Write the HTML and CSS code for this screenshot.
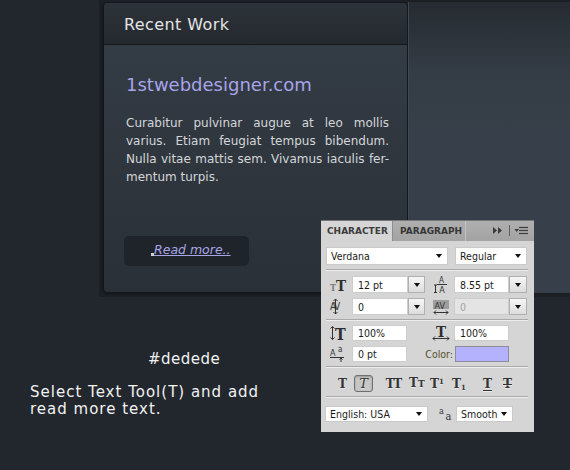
FILE: index.html
```html
<!DOCTYPE html>
<html>
<head>
<meta charset="utf-8">
<link rel="stylesheet" href="styles.css">
</head>
<body>
<div class="stage">
  <section class="card">
    <header class="card-head"><h2>Recent Work</h2></header>
    <div class="card-body">
      <h3 class="site">1stwebdesigner.com</h3>
      <p class="copy">
        <span class="ln">Curabitur pulvinar augue at leo mollis</span>
        <span class="ln">varius. Etiam feugiat tempus bibendum.</span>
        <span class="ln">Nulla vitae mattis sem. Vivamus iaculis fer-</span>
        <span class="ln last">mentum turpis.</span>
      </p>
      <a class="more"><span class="caret"></span>Read more..</a>
    </div>
  </section>
  <div class="side"></div>
</div>
<p class="hex">#dedede</p>
<p class="note">Select Text Tool(T) and add<br>read more text.</p>

<div class="ps">
  <div class="ps-tabs">
    <span class="tab on">CHARACTER</span>
    <span class="tab">PARAGRAPH</span>
    <svg class="tools" width="68" height="20" viewBox="0 0 68 20">
      <polygon points="27,6 31,9.5 27,13" fill="#3c3c3c"/>
      <polygon points="32,6 36,9.5 32,13" fill="#3c3c3c"/>
      <line x1="43.5" y1="4" x2="43.5" y2="15" stroke="#5e5e5e"/>
      <polygon points="48.5,8 53,8 50.75,11" fill="#3c3c3c"/>
      <line x1="53" y1="6.5" x2="62" y2="6.5" stroke="#3c3c3c" stroke-width="1.2"/>
      <line x1="53" y1="9.5" x2="62" y2="9.5" stroke="#3c3c3c" stroke-width="1.2"/>
      <line x1="53" y1="12.5" x2="62" y2="12.5" stroke="#3c3c3c" stroke-width="1.2"/>
    </svg>
  </div>
  <div class="ps-body">
    <div class="r1">
      <span class="dd w122">Verdana<i class="arr"></i></span>
      <span class="dd w72">Regular<i class="arr"></i></span>
    </div>
    <div class="sep"></div>
    <div class="g2">
      <span class="ic l">
        <svg width="18" height="15" viewBox="0 0 18 15">
          <text x="0" y="13.5" font-family="DejaVu Serif" font-weight="bold" font-size="9" fill="#7a7a7a">T</text>
          <text x="6" y="13.5" font-family="DejaVu Serif" font-weight="bold" font-size="15" fill="#2e2e2e">T</text>
        </svg>
      </span>
      <span class="in">12 pt</span>
      <span class="btn"><i class="arr"></i></span>
      <span class="ic r">
        <svg width="15" height="17" viewBox="0 0 15 17">
          <text x="8.5" y="6.5" text-anchor="middle" font-family="DejaVu Sans" font-size="8" fill="#333">A</text>
          <line x1="4" y1="8.5" x2="14" y2="8.5" stroke="#333"/>
          <text x="9" y="16.5" text-anchor="middle" font-family="DejaVu Sans" font-size="9" fill="#333">A</text>
          <path d="M2.5 9v7.5M1 16.5h3M1 9h3" stroke="#333" fill="none"/>
        </svg>
      </span>
      <span class="in">8.55 pt</span>
      <span class="btn"><i class="arr"></i></span>
    </div>
    <div class="g2">
      <span class="ic l">
        <svg width="16" height="17" viewBox="0 0 16 17">
          <text x="0" y="12" font-family="DejaVu Sans" font-size="10" fill="#333" letter-spacing="-1.5">AV</text>
          <path d="M5.5 1v15M3.5 3l2-2 2 2M3.5 14l2 2 2-2" stroke="#333" fill="none"/>
        </svg>
      </span>
      <span class="in">0</span>
      <span class="btn"><i class="arr"></i></span>
      <span class="ic r">
        <svg width="16" height="16" viewBox="0 0 16 16">
          <rect x="0" y="1" width="16" height="9" fill="#9d9d9d"/>
          <text x="1.5" y="9.5" font-family="DejaVu Sans" font-size="9" fill="#333">AV</text>
          <path d="M1 13.5h14M3 11.5l-2 2 2 2M13 11.5l2 2-2 2" stroke="#333" fill="none"/>
        </svg>
      </span>
      <span class="in off">0</span>
      <span class="btn"><i class="arr"></i></span>
    </div>
    <div class="sep"></div>
    <div class="g4">
      <span class="ic l">
        <svg width="18" height="16" viewBox="0 0 18 16">
          <path d="M2.5 1.5v13M0.5 3.5l2-2 2 2M0.5 12.5l2 2 2-2" stroke="#333" fill="none"/>
          <text x="5" y="14.5" font-family="DejaVu Serif" font-weight="bold" font-size="16" fill="#2e2e2e">T</text>
        </svg>
      </span>
      <span class="in">100%</span>
      <span class="ic r4">
        <svg width="18" height="16" viewBox="0 0 18 16">
          <text x="9" y="11.5" text-anchor="middle" font-family="DejaVu Serif" font-weight="bold" font-size="15" fill="#2e2e2e">T</text>
          <path d="M1 13.5h16M3 11.5l-2 2 2 2M15 11.5l2 2-2 2" stroke="#333" fill="none"/>
        </svg>
      </span>
      <span class="in">100%</span>
    </div>
    <div class="g4">
      <span class="ic l">
        <svg width="16" height="16" viewBox="0 0 16 16">
          <text x="0" y="10" font-family="DejaVu Sans" font-size="9" fill="#333">A</text>
          <text x="8" y="6" font-family="DejaVu Sans" font-size="8" fill="#333">a</text>
          <line x1="0" y1="11.5" x2="14" y2="11.5" stroke="#333"/>
          <path d="M11 16v-4M9.5 13.5l1.5-1.5 1.5 1.5" stroke="#333" fill="none"/>
        </svg>
      </span>
      <span class="in">0 pt</span>
      <span class="lbl">Color:</span>
      <span class="sw"></span>
    </div>
    <div class="sep"></div>
    <div class="r6">
      <span class="st s1">T</span>
      <span class="st box"><em>T</em></span>
      <span class="st s3">TT</span>
      <span class="st s4">T<span class="smc">T</span></span>
      <span class="st s5">T<span class="sup">1</span></span>
      <span class="st s6">T<span class="sub">1</span></span>
      <span class="st s7">T</span>
      <span class="st s8">T</span>
    </div>
    <div class="sep"></div>
    <div class="r7">
      <span class="dd w103">English: USA<i class="arr"></i></span>
      <svg class="aa" width="14" height="14" viewBox="0 0 14 14">
        <text x="0" y="7" font-family="DejaVu Serif" font-size="9" fill="#333">a</text>
        <text x="6.5" y="12.5" font-family="DejaVu Serif" font-size="11" fill="#333">a</text>
      </svg>
      <span class="dd w57">Smooth<i class="arr"></i></span>
    </div>
  </div>
</div>
</body>
</html>
```
FILE: styles.css
```css
* { box-sizing: border-box; }
html, body { margin: 0; }
body {
  width: 570px;
  height: 470px;
  overflow: hidden;
  position: relative;
  background: #22272e;
  font-family: "DejaVu Sans", Verdana, sans-serif;
}

/* ---------- site mock ---------- */
.stage {
  display: flex;
  height: 297px;
  margin-left: 99px;
  padding: 2px 0 4px 4px;
  background: #1c2025;
}
.card {
  width: 305px;
  display: flex;
  flex-direction: column;
  border: 1px solid #14171b;
  border-radius: 5px;
  overflow: hidden;
  box-shadow: -1px 1px 2px rgba(0,0,0,.35);
}
.card-head {
  height: 42px;
  padding: 11.5px 20px 0;
  background: linear-gradient(#2d333a, #24292f);
  border-bottom: 1px solid #15181c;
}
.card-head h2 {
  margin: 0;
  font-size: 16px;
  line-height: 20px;
  font-weight: normal;
  letter-spacing: .4px;
  color: #e4e4e4;
}
.card-body {
  flex: 1;
  padding: 29px 18px 0 22px;
  background: linear-gradient(#333b44, #2a3037);
}
.site {
  margin: 0;
  font-size: 18px;
  line-height: 22px;
  font-weight: normal;
  color: #a8a4e8;
}
.copy {
  margin: 18px 0 0;
  font-size: 12px;
  line-height: 18px;
  color: #d3d6d9;
}
.ln {
  display: block;
  text-align: justify;
  text-align-last: justify;
}
.ln.last { text-align-last: left; }
.more {
  display: block;
  position: relative;
  width: 125px;
  height: 30px;
  margin: 50px 0 0 -2px;
  padding-left: 30px;
  border-radius: 5px;
  background: #1f242a;
  color: #a8a4e8;
  font-size: 12.5px;
  line-height: 28px;
  font-style: italic;
  text-decoration: underline;
}
.caret {
  position: absolute;
  left: 27px;
  top: 17px;
  width: 3px;
  height: 3px;
  background: #d0d0d0;
}
.side {
  flex: 1;
  border-left: 1px solid #404952;
  background: linear-gradient(#262b31, #343c45 70px, #37404a 140px);
}

.hex {
  margin: 53px 0 0 148px;
  font-size: 15px;
  line-height: 18px;
  letter-spacing: .5px;
  color: #f2f2f2;
}
.note {
  margin: 16px 0 0 30px;
  font-size: 15px;
  line-height: 17px;
  letter-spacing: 1px;
  color: #f2f2f2;
}

/* ---------- Photoshop character panel ---------- */
.ps {
  position: absolute;
  left: 321px;
  top: 220px;
  width: 213px;
  height: 212px;
  background: #d5d5d5;
  border-top: 1px solid #777;
  font-size: 10.5px;
  font-stretch: semi-condensed;
  color: #1a1a1a;
}
.ps svg { overflow: visible; }
.ps-tabs {
  display: flex;
  height: 20px;
  background: linear-gradient(#afafaf, #a3a3a3);
}
.tab {
  width: 73px;
  padding-left: 7px;
  font-size: 9px;
  font-weight: bold;
  font-stretch: normal;
  line-height: 20px;
  color: #363636;
  border-right: 1px solid #c3c3c3;
}
.tab.on {
  width: 72px;
  padding-left: 6px;
  background: #d5d5d5;
  color: #3c3c3c;
  border-right: 1px solid #8e8e8e;
}
.tools { display: block; }

.ps-body { padding-left: 5px; }
.r1 { display: flex; height: 18px; margin-top: 6px; }
.dd {
  display: flex;
  align-items: center;
  padding-left: 4px;
  background: #fff;
  border: 1px solid #cacaca;
  white-space: nowrap;
}
.w122 { width: 122px; }
.w72 { width: 72px; margin-left: 7px; }
.arr {
  width: 0;
  height: 0;
  border-left: 3px solid transparent;
  border-right: 3px solid transparent;
  border-top: 4px solid #111;
}
.dd .arr { margin-left: auto; margin-right: 5px; }

.sep {
  height: 2px;
  margin: 4px 6px 0 0;
  border-top: 1px solid #a9a9a9;
  border-bottom: 1px solid #ededed;
}
.g2 {
  display: grid;
  grid-template-columns: 26px 56px 17px 29px 55px 18px;
  height: 17px;
  margin-top: 5px;
}
.g4 {
  display: grid;
  grid-template-columns: 26px 55px 47px 55px;
  height: 16px;
  margin-top: 5px;
}
.sep + .g4 { margin-top: 4px; }
.ic { display: flex; align-items: center; }
.ic.l { padding-left: 4px; }
.ic.r { padding-left: 8px; }
.ic.r4 { padding-left: 25px; }
.ic svg { display: block; }
.in {
  display: flex;
  align-items: center;
  padding-left: 5px;
  background: #fff;
  border: 1px solid #cdcdcd;
}
.in.off { background: #e4e4e4; color: #a3a3a3; }
.btn {
  display: flex;
  align-items: center;
  justify-content: center;
  background: linear-gradient(#f6f6f6, #dcdcdc);
  border: 1px solid #b0b0b0;
}
.lbl {
  display: flex;
  align-items: center;
  justify-content: flex-end;
  padding-right: 1px;
  color: #57502c;
}
.sw {
  margin-left: 1px;
  background: #b4b1fd;
  border: 1px solid #8d8c9c;
}

.r6 {
  display: flex;
  align-items: center;
  height: 17px;
  margin-top: 7px;
}
.st {
  display: block;
  font-family: "DejaVu Serif", serif;
  font-weight: bold;
  font-size: 12px;
  font-stretch: normal;
  line-height: 16px;
  color: #333;
  text-align: center;
  white-space: nowrap;
  text-shadow: 0 1px 0 rgba(255,255,255,.5);
}
.s1 { width: 9px; margin-left: 12px; }
.box {
  width: 19px;
  height: 17px;
  margin-left: 7px;
  border: 1px solid #6f6f6f;
  border-radius: 3px;
  background: #c7c7c7;
  box-shadow: inset 0 1px 2px rgba(0,0,0,.25);
  line-height: 15px;
}
.box em { font-style: italic; font-weight: normal; font-size: 13px; }
.s3 { width: 17px; margin-left: 12px; letter-spacing: -1px; }
.s4 { width: 13px; margin-left: 7px; }
.smc { font-size: 9px; }
.s5 { width: 13px; margin-left: 8px; }
.sup { font-size: 7px; vertical-align: 4px; line-height: 0; }
.s6 { width: 11px; margin-left: 9px; }
.sub { font-size: 7px; vertical-align: -2px; line-height: 0; }
.s7 {
  width: 9px;
  margin-left: 20px;
  text-decoration: underline;
  text-underline-offset: 2px;
}
.s8 { width: 8px; margin-left: 11px; text-decoration: line-through; }

.r7 {
  display: flex;
  align-items: center;
  height: 16px;
  margin-top: 8px;
}
.r7 .dd { height: 16px; }
.w103 { width: 103px; margin-left: -1px; }
.aa { display: block; margin-left: 11px; }
.w57 { width: 57px; margin-left: 3px; }
```
